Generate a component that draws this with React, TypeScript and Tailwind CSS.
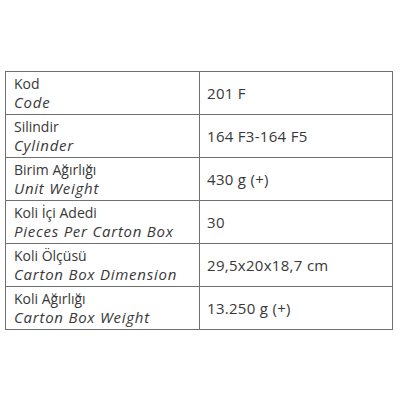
import React from "react";

const rows: [string, string, string][] = [
  ["Kod", "Code", "201 F"],
  ["Silindir", "Cylinder", "164 F3-164 F5"],
  ["Birim Ağırlığı", "Unit Weight", "430 g (+)"],
  ["Koli İçi Adedi", "Pieces Per Carton Box", "30"],
  ["Koli Ölçüsü", "Carton Box Dimension", "29,5x20x18,7 cm"],
  ["Koli Ağırlığı", "Carton Box Weight", "13.250 g (+)"],
];

export default function App() {
  return (
    <div className="w-[400px] h-[400px] bg-white pt-[71px] pl-[5px]" style={{ fontFamily: "'Open Sans', sans-serif" }}>
      <table className="border-collapse w-[388px] text-[14px] leading-[18px] text-[#383838]">
        <tbody>
          {rows.map(([tr, en, v]) => (
            <tr key={tr} className="h-[43px]">
              <td className="border-[1.5px] border-[#707070] w-[194px] pl-[8px] align-middle">
                <div>{tr}</div>
                <div className="italic text-[15px] tracking-[0.05em]">{en}</div>
              </td>
              <td className="border-[1.5px] border-[#707070] pl-[7px] align-middle text-[15px] tracking-[0.02em]">{v}</td>
            </tr>
          ))}
        </tbody>
      </table>
    </div>
  );
}
